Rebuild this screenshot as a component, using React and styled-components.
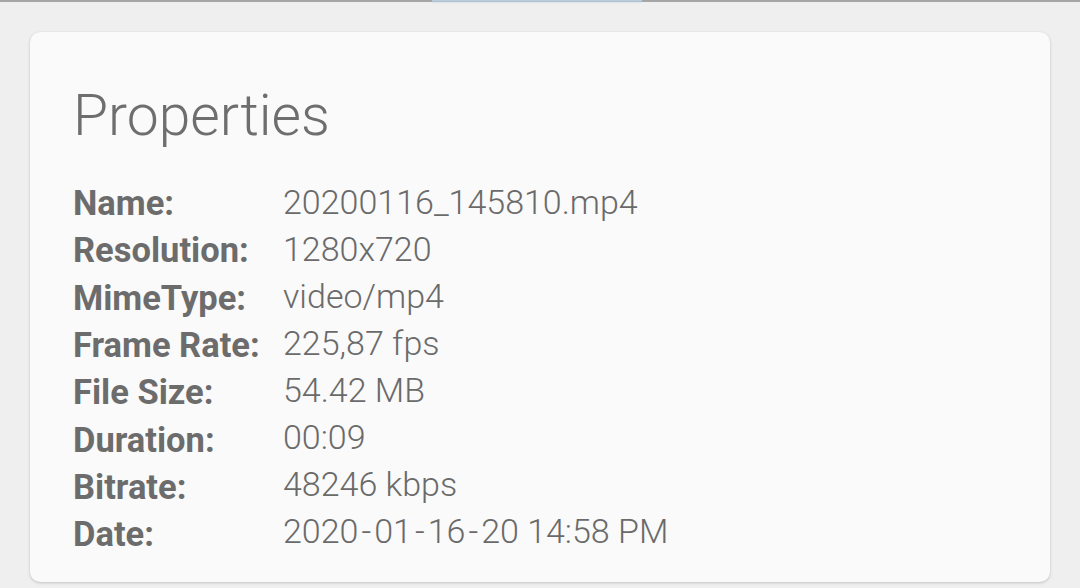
import React from "react";
import styled, { createGlobalStyle } from "styled-components";

const Global = createGlobalStyle`
  html, body { margin: 0; padding: 0; background: #efefef; }
  body { font-family: Roboto, "Noto Sans", "Liberation Sans", sans-serif; }
`;

const Page = styled.div`
  width: 1080px;
  height: 588px;
  overflow: hidden;
  display: flex;
  flex-direction: column;
  background: #efefef;
`;

const TopEdge = styled.div`
  height: 2px;
  flex: none;
  background: #a6a6a6;
  display: flex;
  justify-content: flex-start;
  padding-left: 432px;
`;

const TopGlow = styled.div`
  width: 210px;
  height: 4px;
  background: linear-gradient(to bottom, rgba(190, 215, 235, 0.9), rgba(220, 232, 242, 0));
`;

const Card = styled.section`
  margin: 30px 0 0 30px;
  width: 1020px;
  height: 550px;
  box-sizing: border-box;
  background: #fafafa;
  border-radius: 10px;
  box-shadow: 0 1px 3px rgba(0, 0, 0, 0.18), 0 0 1px rgba(0, 0, 0, 0.08);
  padding: 49px 0 0 43px;
  display: flex;
  flex-direction: column;
`;

const Title = styled.h1`
  margin: 0;
  font-family: Roboto, sans-serif;
  font-weight: 300;
  font-size: 57px;
  line-height: 70px;
  color: #6e6e6e;
`;

const Table = styled.div`
  margin-top: 28px;
  display: grid;
  grid-template-columns: 210px auto;
  grid-auto-rows: 47px;
  align-items: baseline;
`;

const Label = styled.div`
  font-family: Roboto, sans-serif;
  font-weight: 700;
  font-size: 34.5px;
  line-height: 47px;
  color: #6c6c6c;
  position: relative;
  top: ${(p) => p.$shift}px;
`;

const Value = styled.div`
  font-family: Roboto, sans-serif;
  font-weight: 300;
  font-size: 34px;
  line-height: 47px;
  color: #6a6a6a;
`;

const Dash = styled.span`
  margin: 0 3px;
`;

const withDashes = (text) =>
  text.includes("-")
    ? text.split("-").flatMap((part, i) =>
        i === 0 ? [part] : [<Dash key={i}>-</Dash>, part]
      )
    : text;

const rows = [
  ["Name:", "20200116_145810.mp4"],
  ["Resolution:", "1280x720"],
  ["MimeType:", "video/mp4"],
  ["Frame Rate:", "225,87 fps"],
  ["File Size:", "54.42 MB"],
  ["Duration:", "00:09"],
  ["Bitrate:", "48246 kbps"],
  ["Date:", "2020-01-16-20 14:58 PM"],
];

export default function App() {
  return (
    <>
      <Global />
      <Page>
        <TopEdge>
          <TopGlow />
        </TopEdge>
        <Card>
          <Title>Properties</Title>
          <Table>
            {rows.map(([k, v], i) => (
              <React.Fragment key={k}>
                <Label $shift={1 + Math.round(i / 3)}>{k}</Label>
                <Value>{withDashes(v)}</Value>
              </React.Fragment>
            ))}
          </Table>
        </Card>
      </Page>
    </>
  );
}
